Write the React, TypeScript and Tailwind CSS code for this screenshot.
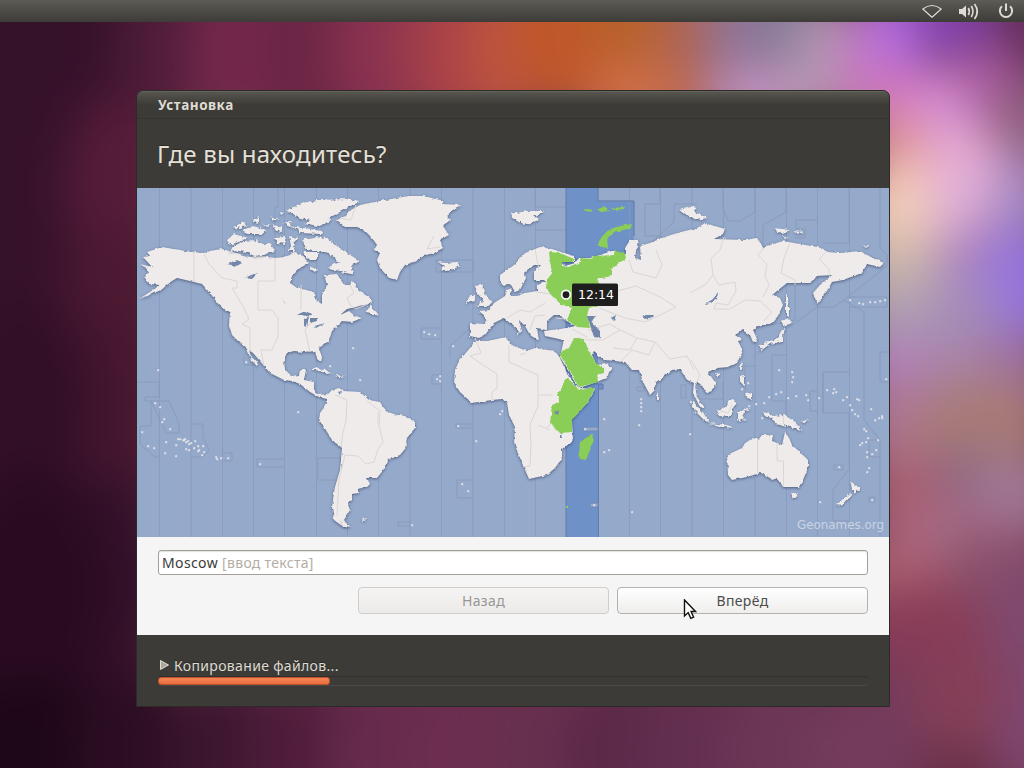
import React from "react";

const FONT = "font-['Noto_Sans','Open_Sans',sans-serif]";

type Blob = [number, number, number, number, string];

/* Soft colour patches of the desktop wallpaper: cx, cy, rx, ry, colour */
const wallpaper: Blob[] = [
  [115, 190, 50, 100, "#551c38"],
  [110, 300, 50, 80, "#4c1932"],
  [115, 400, 50, 90, "#47172f"],
  [30, 400, 60, 110, "#320f27"],
  [110, 580, 60, 110, "#34112a"],
  [30, 590, 80, 120, "#290b21"],
  [30, 750, 130, 70, "#1e0717"],
  [165, 40, 50, 70, "#4f1c39"],
  [245, 50, 60, 80, "#74284b"],
  [315, 50, 60, 80, "#6c2545"],
  [385, 50, 55, 80, "#893250"],
  [450, 50, 50, 80, "#a64049"],
  [510, 50, 50, 80, "#bc5340"],
  [575, 30, 60, 80, "#c05729"],
  [640, 20, 55, 50, "#b8622b"],
  [640, 100, 60, 35, "#d0704c"],
  [690, 30, 38, 60, "#b26450"],
  [735, 30, 35, 70, "#94718f"],
  [785, 20, 45, 50, "#87799a"],
  [765, 100, 65, 35, "#c091bd"],
  [830, 60, 35, 60, "#b29ab0"],
  [865, 70, 32, 60, "#c67aba"],
  [900, 25, 40, 45, "#b56ce0"],
  [905, 95, 42, 30, "#d074bc"],
  [960, 15, 50, 40, "#7f40ac"],
  [1035, 30, 45, 70, "#652f5a"],
  [985, 85, 42, 40, "#a85a9c"],
  [940, 110, 32, 40, "#d48cd4"],
  [1030, 135, 45, 55, "#90607f"],
  [960, 170, 45, 50, "#e6aad4"],
  [895, 145, 30, 35, "#de9292"],
  [900, 210, 50, 50, "#f2cdb8"],
  [965, 200, 38, 35, "#e2b0d8"],
  [1025, 200, 34, 45, "#a488c2"],
  [900, 270, 55, 35, "#cbb7aa"],
  [970, 265, 38, 40, "#ad86c0"],
  [1025, 285, 42, 60, "#9574de"],
  [900, 325, 50, 40, "#ac9eb1"],
  [965, 320, 38, 40, "#a48bb9"],
  [900, 375, 45, 40, "#b27fb8"],
  [965, 375, 45, 35, "#aa83a4"],
  [1025, 370, 34, 35, "#a0709c"],
  [900, 430, 45, 45, "#ad7690"],
  [985, 425, 70, 45, "#a87b76"],
  [965, 475, 45, 28, "#906a83"],
  [905, 500, 42, 45, "#a95f70"],
  [1020, 495, 45, 38, "#a17896"],
  [955, 535, 60, 32, "#a56a86"],
  [895, 575, 50, 35, "#ac6071"],
  [1005, 570, 60, 40, "#8a506a"],
  [920, 635, 70, 50, "#893c57"],
  [1030, 630, 45, 70, "#7f496f"],
  [905, 700, 45, 50, "#783b5b"],
  [965, 700, 50, 50, "#853f57"],
  [1035, 735, 40, 70, "#7f4770"],
  [140, 750, 70, 70, "#2b0d22"],
  [225, 750, 65, 70, "#3b152e"],
  [300, 750, 60, 70, "#4e1c3a"],
  [380, 750, 60, 70, "#662a4c"],
  [460, 750, 60, 70, "#6c2d50"],
  [540, 750, 60, 70, "#68304f"],
  [620, 750, 60, 70, "#5c2949"],
  [700, 750, 60, 70, "#632f50"],
  [780, 750, 60, 70, "#6c3757"],
  [865, 750, 60, 60, "#743b5c"],
];

const mainland: string[] = [
  // North and Central America
  "M140 264L152 267L143 257L150 256L147 252L162 247L180 250L192 252L204 253L209 251L222 249L237 253L250 257L262 256L275 258L284 257L290 255L294 251L304 257L309 263L300 268L292 276L290 283L297 288L307 290L315 294L317 301L322 304L322 295L327 285L324 275L337 274L344 285L350 285L352 281L359 291L370 298L372 303L360 306L347 309L340 315L349 311L355 316L362 318L352 322L342 321L332 331L329 341L319 348L322 358L321 362L317 359L315 351L304 352L294 351L287 353L284 359L285 370L292 376L299 375L300 370L306 370L304 380L314 382L314 392L319 395L327 394L331 396L327 399L319 397L310 392L300 384L292 381L284 380L270 373L265 367L260 361L253 353L249 350L251 356L258 364L257 366L252 361L247 349L240 343L232 335L229 325L230 313L219 305L210 293L202 284L190 281L177 278L172 281L167 285L161 290L154 293L139 299L150 292L160 285L149 284L144 278L149 273L146 268Z",
  // South America
  "M327 395L332 390L339 388L344 391L360 392L369 400L380 402L384 408L388 412L397 415L405 416L415 422L415 428L407 438L405 449L400 455L389 459L385 468L377 478L367 478L370 484L367 487L358 489L358 493L352 494L352 500L348 505L350 510L344 520L350 527L342 526L334 520L332 507L335 487L340 470L342 448L332 440L324 427L319 420L320 413L327 403Z",
  // Greenland
  "M337 220L345 216L349 211L360 205L374 202L397 198L408 196L424 196L444 201L442 204L462 205L454 210L447 215L450 221L443 226L449 235L440 240L443 248L434 253L424 256L414 262L405 265L400 272L397 280L389 278L380 268L377 260L380 253L374 250L377 245L372 238L364 230L357 227L345 227Z",
  // Europe and Asia
  "M470 323L485 324L485 316L479 311L489 310L494 303L505 296L507 290L512 288L510 296L517 296L525 293L537 291L537 285L546 282L544 280L534 280L534 271L540 265L534 265L525 273L526 278L520 290L515 292L510 283L504 286L500 283L500 275L514 265L525 253L540 247L552 249L574 256L574 262L560 262L565 266L575 263L579 258L590 258L612 251L625 255L625 248L630 240L638 240L635 258L641 260L640 246L650 243L662 238L677 233L697 228L705 223L725 229L723 234L714 239L745 240L757 238L763 247L783 241L800 244L822 248L827 252L840 253L860 251L873 258L884 263L880 267L867 264L862 273L843 280L832 282L827 291L817 304L813 293L820 285L832 275L817 276L810 283L787 283L772 295L780 298L783 305L778 316L770 325L760 325L753 330L758 341L753 342L750 335L742 330L735 335L742 340L738 341L743 351L737 363L729 367L717 368L708 372L717 385L708 393L697 382L695 385L697 397L705 408L700 407L693 393L694 383L687 380L680 369L672 370L655 383L655 390L650 395L642 380L639 370L632 370L625 362L604 360L594 351L592 355L597 365L605 363L612 367L606 378L597 382L579 388L569 372L560 357L562 348L564 340L545 336L544 331L567 328L575 326L565 320L560 315L554 315L547 321L547 330L537 328L539 341L530 335L525 326L519 320L522 331L517 336L519 331L504 318L494 323L485 335L479 338L470 336Z",
  // Africa
  "M475 341L487 341L507 337L509 343L514 346L527 351L534 348L555 351L560 358L569 377L579 388L595 389L587 403L572 420L573 440L562 450L562 458L555 468L547 475L529 479L522 463L514 443L515 427L509 415L507 403L502 399L492 400L472 403L460 392L454 383L455 370L459 361L470 348Z",
  // Australia
  "M727 455L742 448L745 443L753 438L758 440L762 435L773 435L772 441L782 445L785 432L788 435L792 445L800 452L808 460L808 468L803 480L799 487L783 487L778 478L772 480L770 478L760 473L747 477L732 480L728 475Z",
];

const islands: string[] = [
  // Canadian archipelago
  "M302 203L317 200L347 199L360 202L350 206L342 211L334 215L327 223L317 227L304 224L310 220L297 217L287 211L293 207L300 205Z",
  "M288 226L304 228L322 231L321 234L297 233L300 230Z",
  "M302 240L314 237L327 238L337 246L347 253L360 261L352 265L353 275L340 271L327 267L339 262L329 253L317 251L307 249Z",
  "M228 252L236 245L244 241L255 240L263 244L270 243L275 251L264 255L254 256L247 252L238 251Z",
  "M227 240L234 234L247 238L239 242L229 245Z",
  "M232 228L244 222L247 226L235 229ZM252 220L259 217L259 222L254 223ZM242 230L254 226L267 231L262 234L248 234ZM269 216L280 219L274 221ZM274 225L283 228L282 233L275 229ZM275 238L285 237L285 244L277 243ZM289 236L299 238L293 243L296 251L287 251L291 246ZM302 252L317 252L317 260L310 260ZM309 266L318 270L314 272Z",
  "M365 313L370 305L379 315L372 314ZM280 212L284 213L281 215ZM283 223L292 222L290 226ZM262 225L269 224L268 227Z",
  // North Atlantic
  "M438 262L444 266L440 269L449 271L460 266L457 262L446 263Z",
  "M475 286L481 285L484 291L487 296L492 303L486 306L477 306L483 300L477 293ZM469 296L475 294L475 301L467 303Z",
  "M510 214L527 211L545 211L534 216L539 220L525 225L517 220Z",
  // Arctic Russia
  "M679 210L690 206L697 208L694 212L708 218L697 220L687 215ZM775 228L790 230L784 233L777 232ZM793 231L803 232L798 234ZM781 236L788 238L784 239ZM862 246L869 245L868 247Z",
  // Japan and Sakhalin
  "M786 296L788 296L789 308L789 317L786 315ZM782 321L787 318L792 323L783 326ZM785 328L782 341L770 344L762 350L759 346L770 341L778 338L781 331Z",
  // South-east Asia
  "M740 366L743 362L742 368L740 371ZM740 376L744 375L744 387L740 382ZM745 392L752 394L752 400L746 397ZM656 393L659 398L656 400ZM716 373L720 373L718 376Z",
  "M717 410L723 408L733 398L737 402L730 417L719 416ZM690 400L698 407L710 422L704 420L695 411ZM709 423L727 425L735 428L722 427ZM738 412L750 408L742 414L745 420L741 419L738 422Z",
  "M762 412L768 413L773 416L783 415L793 420L802 430L790 427L775 423L772 418L765 416ZM800 422L808 419L804 423Z",
  "M791 493L798 493L794 499ZM850 480L857 487L861 487L855 494L852 489ZM850 493L852 495L842 506L836 505Z",
  // Caribbean and Falklands
  "M309 370L317 367L332 373L326 374L317 370ZM335 375L346 376L338 377ZM361 519L368 518L364 520ZM341 520L350 527L343 527Z",
];

const green: string[] = [
  "M549 252L560 253L574 259L572 262L562 262L562 266L569 267L579 263L581 258L592 259L594 256L614 255L615 251L625 253L626 258L612 268L612 276L597 279L602 288L599 305L589 308L587 316L590 328L577 327L567 320L572 308L562 305L552 296L546 288L547 280L552 273L550 261Z",
  "M574 338L584 339L589 351L597 365L604 368L604 373L597 375L598 382L579 387L570 372L560 355L562 351L569 348Z",
  "M567 378L572 382L579 390L595 388L587 403L572 420L572 432L560 433L550 423L552 405L560 402L557 395Z",
  "M592 434L594 440L586 460L580 459L579 453L580 442Z",
  "M597 245L601 238L607 231L616 227L632 224L631 228L616 232L607 238L608 248L602 247Z",
  "M584 209L593 210L592 212L585 211ZM597 210L604 206L606 209L611 211L601 212ZM612 208L625 207L624 209L614 210ZM566 506L568 506L568 508L566 508Z",
];

const meridians = [159.5, 191, 222.5, 253.5, 284.5, 316.5, 347.5, 378.5, 410, 441.5, 473, 504.5, 535.5, 629.5, 660.5, 692, 723.5, 755, 786.5, 817.5, 849.5];

const zoneLines: string[] = [
  "M137 382H159V397H145V401H151V426H140V444L155 457H159M151 401H169L179 423V433H166Z",
  "M191 424H203V437L209 450L203 457H191M222 453H232V461H222M284 459H257V467H284M318 458H341V480H318Z",
  "M441 260H436V272H473V260H441M441 328H421V339H441M473 424H456V428H473M473 480H457V498H473M441 375H432V384H441M410 522H398V526H410",
  "M470 328L450 346V358M535 207V188M535 207H566M535 230H566M598 188V201H634V236L623 248",
  "M660 204H645V236H662M660 188V204M674 204H697M674 205V222L652 242M723 188V208L728 221H740L755 212V188M786 212L763 225V245M786 188V212M817 220H796V229H805V238H794M849 188V243H823",
  "M880 188V248L887 255V266L844 300L834 307H817L787 329L755 355M844 300L864 312V420L880 440V457H869V440H880M849 297H887V307H849",
  "M849 372H823V413H849V469L833 490V521H849M823 372V413M817 391H810V411H817M786 355H772V401H786V413M755 366H745V395M795 273V320L770 325M880 352H889M880 352V382H889M880 457V537",
  "M244 356V365H253M278 188V207H275V258M681 385H686V398H681ZM834 465h9v5h-9ZM869 497h6v5h-6ZM637 387h7v4h-7ZM723 382V399H700",
];

const borders: string[] = [
  "M194 251V282M204 254L209 264L222 278L237 281V288H232L244 308L249 319L242 324L250 328V352M275 258V281H258V310H272L278 318V336L272 350L261 350L264 366M301 285V310M311 322L305 330L310 352M350 285L354 293L347 298L350 305L356 309L368 304",
  "M335 395L347 400L346 421L343 432L341 447M367 401L380 411L379 425L383 442L378 449L374 462L366 464L358 456L345 455L339 480L337 516M378 425L378 412",
  "M356 205L351 220L340 218M434 236L427 249L440 247",
  "M535 249L539 270M507 318L520 310L530 312L545 303M552 294L536 292M530 330L535 316L545 315M485 324L487 320",
  "M475 338L481 353L470 356L486 367L497 374L497 388L492 392L492 400M509 345L509 362L538 375V406L530 425L531 445L530 466L523 467M538 395H553M538 425L550 430M520 355L526 353M555 418L547 428",
  "M629 260L633 272L656 278L662 265L656 250M614 292L636 286L660 297L676 307L662 314L645 322L625 318L599 308M585 340L603 340L620 330L610 324L588 330M620 330L637 338L630 350L613 348M637 338L655 342L670 359L687 356L694 370M655 342L649 355L632 350L620 362",
  "M724 237L720 250L711 258L713 275L705 285L690 293M713 275L719 285L735 282L736 291L728 305L716 303L714 309L730 309L745 300L760 301L772 312L764 321M764 248L758 255L767 264L765 276L769 285L763 297M790 243L784 258L781 273L795 280V285M827 251L819 259L829 269V276",
  "M757.5 439V473M777 443V461H783.5V487M783.5 415V424M717 410L728 413L732 405M691 360L700 375L695 386M556 318L566 319M572 329L587 337",
];

const water: string[] = [
  "M587 316L595 316L592 323L600 331L600 338L594 337L591 328L589 323Z",
  "M228 264L237 260L242 263L235 267ZM244 278L258 273L252 279ZM281 297L286 305L283 301ZM297 315L305 311L312 314L308 316ZM304 319L309 316L307 327L304 326ZM310 318L318 318L317 321L310 323ZM314 326L325 323L316 328Z",
  "M705 304L713 299L718 292L717 299L711 303ZM642 317L646 315L654 315L653 317L645 319ZM611 318L616 315L614 321ZM554 413L559 410L558 415ZM560 430L562 438L560 438ZM338 392L341 391L340 395Z",
];

const dots =
  "155,403 160,407 164,419 162,422 170,429 142,432 148,446 154,448 165,453 176,456 166,442 176,445 178,439 180,439 183,440 185,439 186,442 189,444 191,443 195,441 188,441 184,440 186,449 189,450 194,448 198,446 199,450 203,446 204,452 198,451 202,455 216,457 217,459 221,458 228,458 260,464 158,370 298,412 246,362 424,332 429,334 435,335 353,348 453,346 437,379 440,376 440,381 502,411 500,414 458,426 476,441 462,484 468,491 604,419 585,429 604,452 609,450 641,399 641,403 641,407 641,411 639,425 690,434 594,505 632,512 779,370 792,372 793,377 792,382 781,392 776,394 764,403 769,397 796,396 788,398 806,395 808,400 819,398 827,390 834,389 836,392 833,393 843,400 847,397 857,399 859,400 850,405 852,410 855,414 858,416 871,409 875,420 879,418 882,418 882,416 886,379 864,429 866,431 868,438 860,445 862,443 866,442 878,440 876,450 872,454 867,452 867,457 869,468 867,472 839,467 872,500 820,502 850,300 859,303 863,304 870,302 875,302 880,301 885,300 336,327 412,525 330,366 360,380 742,389 748,383 749,406 756,404 762,418"
    .split(" ")
    .map((p) => p.split(",").map(Number));

function Wallpaper() {
  return (
    <svg className="absolute inset-0" width="1024" height="768" viewBox="0 0 1024 768" aria-hidden="true">
      <defs>
        <filter id="soft" x="-10%" y="-10%" width="120%" height="120%" colorInterpolationFilters="sRGB">
          <feGaussianBlur stdDeviation="23" />
        </filter>
      </defs>
      <g filter="url(#soft)">
        <rect x="-100" y="-100" width="1224" height="968" fill="#6a3048" />
        <rect x="-100" y="-100" width="260" height="968" fill="#36112a" />
        {wallpaper.map(([cx, cy, rx, ry, fill], i) => (
          <ellipse key={i} cx={cx} cy={cy} rx={rx} ry={ry} fill={fill} />
        ))}
      </g>
    </svg>
  );
}

function TimezoneMap() {
  return (
    <svg className="block" width="752" height="349" viewBox="137 188 752 349" role="img" aria-label="Карта часовых поясов">
      <defs>
        <filter id="coast" x="-5%" y="-5%" width="110%" height="110%" colorInterpolationFilters="sRGB">
          <feTurbulence type="fractalNoise" baseFrequency="0.22" numOctaves="2" seed="4" result="n" />
          <feDisplacementMap in="SourceGraphic" in2="n" scale="3" xChannelSelector="R" yChannelSelector="G" result="land" />
          <feDropShadow in="land" dx="0" dy="1" stdDeviation="1.6" floodColor="#1f2f50" floodOpacity="0.6" />
        </filter>
        <filter id="shore" x="-5%" y="-5%" width="110%" height="110%" colorInterpolationFilters="sRGB">
          <feTurbulence type="fractalNoise" baseFrequency="0.25" numOctaves="2" seed="9" result="n" />
          <feDisplacementMap in="SourceGraphic" in2="n" scale="5" xChannelSelector="R" yChannelSelector="G" result="land" />
          <feDropShadow in="land" dx="0" dy="1" stdDeviation="1.1" floodColor="#1f2f50" floodOpacity="0.5" />
        </filter>
        <filter id="rough" colorInterpolationFilters="sRGB">
          <feTurbulence type="fractalNoise" baseFrequency="0.22" numOctaves="2" seed="4" result="n" />
          <feDisplacementMap in="SourceGraphic" in2="n" scale="3" xChannelSelector="R" yChannelSelector="G" />
        </filter>
      </defs>
      <rect x="137" y="188" width="752" height="349" fill="#95a9ca" />
      <path d="M566 188H598V201H634V238L620 262L598 300V537H566ZM598 384H603V389H598Z" fill="#6e91c7" />
      <g fill="none" stroke="#8799bd" strokeWidth="1">
        {meridians.map((x) => (
          <path key={x} d={`M${x} 188V537`} strokeOpacity="0.8" />
        ))}
        {zoneLines.map((d, i) => (
          <path key={i} d={d} strokeOpacity="0.9" />
        ))}
        <path d="M566 188V537M598.5 537V384M598 384H603V389H598M598 188V201H634V236" stroke="#627ba9" />
      </g>
      <path d="M583 427H598V431H583ZM590 503H598V507H590Z" fill="#95a9ca" stroke="#7189b4" strokeWidth="1" />
      <g fill="#efebea" filter="url(#coast)">
        {mainland.map((d, i) => (
          <path key={i} d={d} />
        ))}
      </g>
      <g fill="#efebea" filter="url(#shore)">
        {islands.map((d, i) => (
          <path key={i} d={d} />
        ))}
      </g>
      <g fill="none" stroke="#dad6d5" strokeWidth="1" strokeLinejoin="round">
        {borders.map((d, i) => (
          <path key={i} d={d} />
        ))}
      </g>
      <g fill="#8acd57" filter="url(#rough)">
        {green.map((d, i) => (
          <path key={i} d={d} />
        ))}
      </g>
      <g fill="#7186a9" filter="url(#rough)">
        {water.map((d, i) => (
          <path key={i} d={d} />
        ))}
      </g>
      <g fill="#e0e2e8">
        {dots.map(([x, y], i) => (
          <rect key={i} x={x - 0.8} y={y - 0.8} width="2" height="2" />
        ))}
      </g>
      <circle cx="566" cy="294.7" r="4.3" fill="#1e1e1e" stroke="#fff" strokeWidth="1.7" />
      <rect x="572" y="283.5" width="46" height="22.5" rx="1.5" fill="#1e1e1e" />
      <text x="578" y="299" fontSize="13" fill="#fff" textLength="36" lengthAdjust="spacingAndGlyphs" style={{ fontFamily: "'DejaVu Sans', sans-serif" }}>
        12:14
      </text>
      <text x="797" y="529" fontSize="12.5" fill="#c9d3e4" textLength="87" lengthAdjust="spacingAndGlyphs" style={{ fontFamily: "'DejaVu Sans', sans-serif" }}>
        Geonames.org
      </text>
    </svg>
  );
}

function Panel() {
  return (
    <header className="relative flex h-[22px] items-center justify-end bg-linear-to-b from-[#5c5b55] to-[#3d3c38] text-[#dfdbd2]">
      <svg width="110" height="22" viewBox="914 0 110 22" fill="none" stroke="currentColor">
        <path d="M922.8 9Q932 2 941.2 9L932 17.2Z" strokeWidth="1.2" strokeLinejoin="round" />
        <path d="M959 9H962L966 5.5V17.5L962 14H959Z" fill="currentColor" stroke="none" />
        <path d="M968.3 8Q970.3 11.5 968.3 15M971.3 6Q974.7 11.5 971.3 17M974.5 4Q980 11.5 974.5 19" strokeWidth="1.7" />
        <path d="M1002 6.3A6.1 6.1 0 1 0 1010 6.3M1006 3.5V11" strokeWidth="2" />
      </svg>
    </header>
  );
}

function InstallerWindow() {
  return (
    <main className="relative mt-[68px] ml-[136px] flex h-[617px] w-[754px] flex-col overflow-hidden rounded-t-[7px] border border-[#2b2a27] bg-[#3c3b37]">
      <div className="flex h-[28px] shrink-0 items-center border-t border-b border-t-[#65645d] border-b-[#353430] bg-linear-to-b from-[#56554e] to-[#3c3b37] to-50% pt-[2px] pl-[21px]">
        <span className="text-[13.5px] leading-none font-bold tracking-[0.52px] text-[#dfdbd2]">Установка</span>
      </div>
      <div className="flex h-[69px] shrink-0 items-center pl-5">
        <h1 className="text-[24px] leading-none tracking-[0.22px] text-[#e4e0d8] [text-shadow:0_-1px_0_#282724]">Где вы находитесь?</h1>
      </div>
      <TimezoneMap />
      <div className="flex h-[98px] shrink-0 flex-col gap-3 bg-[#f5f5f5] px-[21px] pt-[13px]">
        <div className="flex h-[25px] w-[710px] items-center rounded-[3px] border border-[#a3a09a] bg-white pl-[3px] text-[14px] leading-none whitespace-pre text-[#3b3b39] shadow-[inset_0_1px_1px_#e4e2df]">
          <span className="tracking-[0.38px]">Moscow </span>
          <span className="tracking-[0.3px] text-[#b4ada5]">[ввод текста]</span>
        </div>
        <div className="flex w-[710px] justify-end gap-2 text-[14px] leading-none tracking-[0.35px]">
          <button className="h-[27px] w-[251px] rounded-[4px] border border-[#cfccc9] bg-linear-to-b from-[#f5f4f3] to-[#ecebea] text-[#989795]">Назад</button>
          <button className="h-[27px] w-[251px] rounded-[4px] border border-[#b5b2ae] bg-linear-to-b from-[#ffffff] to-[#efeeed] text-[#4c4c4c]">Вперёд</button>
        </div>
      </div>
      <div className="flex flex-1 flex-col px-[21px] pt-[22px]">
        <div className="flex h-[19px] items-center gap-[5px] pb-[2px] pl-[2px] text-[14px] leading-none tracking-[0.34px] text-[#dfdbd2] [text-shadow:0_-1px_0_#2a2926]">
          <svg width="9" height="10" viewBox="0 0 9 10" className="-mt-[2px]">
            <path d="M.5.5L8.5 5L.5 9.5Z" fill="#a9a69f" stroke="#dfdbd2" />
          </svg>
          <span>Копирование файлов...</span>
        </div>
        <div className="h-[10px] w-[710px] rounded-[4px] border-t border-b border-t-[#31302d] border-b-[#4a4944]">
          <div className="h-[8px] w-[172px] rounded-[3px] border border-[#b9522b] bg-linear-to-b from-[#f58657] to-[#e96d3d]" />
        </div>
      </div>
    </main>
  );
}

export default function App() {
  return (
    <div className={`relative h-[768px] w-[1024px] overflow-hidden ${FONT}`}>
      <Wallpaper />
      <Panel />
      <InstallerWindow />
      <svg className="absolute top-[599px] left-[683px]" width="14" height="22" viewBox="0 0 14 22" aria-hidden="true">
        <path d="M1.5 1V17L5.2 13.6L7.8 19.4L10.6 18.1L8.1 12.5H12.5Z" fill="#fff" stroke="#111" strokeWidth="1.4" />
      </svg>
    </div>
  );
}
